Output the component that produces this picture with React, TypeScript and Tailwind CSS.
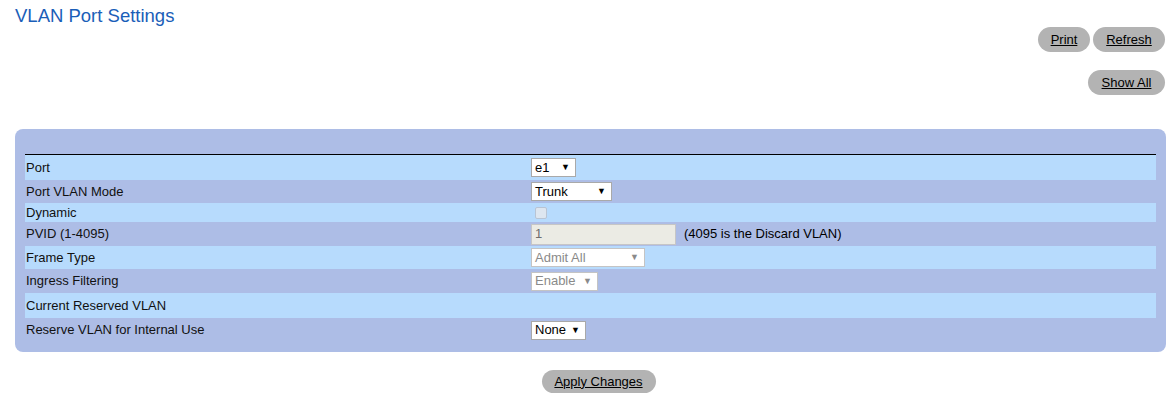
import { ReactNode } from "react";

const FONT = { fontFamily: '"Liberation Sans", Arial, sans-serif' };

function PillButton({ label, w }: { label: string; w: string }) {
  return (
    <button
      className={`${w} h-[25px] rounded-full bg-[#b3b3b3] text-[13px] text-black underline flex items-center justify-center`}
    >
      {label}
    </button>
  );
}

function FakeSelect({
  value,
  w,
  disabled,
}: {
  value: string;
  w: string;
  disabled?: boolean;
}) {
  return (
    <div
      className={`${w} h-[19px] bg-white border border-[#a9a9a9] flex items-center justify-between pl-[3px] pr-[5px] text-[13px] ${
        disabled ? "text-[#8a8a8a] border-[#c4c4c4]" : "text-black"
      }`}
    >
      <span>{value}</span>
      <span className="text-[9px] leading-none">▼</span>
    </div>
  );
}

type Row = { label: string; h: string; light: boolean; value?: ReactNode };

const ROWS: Row[] = [
  { label: "Port", h: "h-[25px]", light: true, value: <FakeSelect value="e1" w="w-[45px]" /> },
  { label: "Port VLAN Mode", h: "h-[23px]", light: false, value: <FakeSelect value="Trunk" w="w-[81px]" /> },
  {
    label: "Dynamic",
    h: "h-[19px]",
    light: true,
    value: (
      <div className="ml-[4px] w-[12px] h-[12px] rounded-[2px] border border-[#b8c4d4] bg-[#dde6f0]" />
    ),
  },
  {
    label: "PVID (1-4095)",
    h: "h-[24px]",
    light: false,
    value: (
      <div className="flex items-center">
        <div className="w-[145px] h-[21px] bg-[#ebebe4] border border-[#c6c6c6] flex items-center pl-[3px] text-[13px] text-[#6d6d6d]">
          1
        </div>
        <span className="ml-[8px] text-[13px] text-black">(4095 is the Discard VLAN)</span>
      </div>
    ),
  },
  { label: "Frame Type", h: "h-[23px]", light: true, value: <FakeSelect value="Admit All" w="w-[114px]" disabled /> },
  { label: "Ingress Filtering", h: "h-[24px]", light: false, value: <FakeSelect value="Enable" w="w-[67px]" disabled /> },
  { label: "Current Reserved VLAN", h: "h-[25px]", light: true },
  { label: "Reserve VLAN for Internal Use", h: "h-[24px]", light: false, value: <FakeSelect value="None" w="w-[55px]" /> },
];

export default function App() {
  return (
    <div className="w-[1172px] h-[410px] bg-white text-black" style={FONT}>
      <div className="flex justify-between pl-[15px] pr-[7px]">
        <h1 className="pt-[5px] text-[18.5px] leading-[22px] text-[#1a5eb8]">VLAN Port Settings</h1>
        <div className="flex flex-col items-end pt-[27px] gap-[18px]">
          <div className="flex gap-[3px]">
            <PillButton label="Print" w="w-[52px]" />
            <PillButton label="Refresh" w="w-[72px]" />
          </div>
          <PillButton label="Show All" w="w-[77px]" />
        </div>
      </div>

      <div className="ml-[15px] mr-[6px] mt-[34px] rounded-[8px] bg-[#adbde6] px-[10px] pt-[25px] pb-[10px]">
        <div className="border-t border-black">
          {ROWS.map((r) => (
            <div
              key={r.label}
              className={`flex items-center ${r.h} ${r.light ? "bg-[#b7dbfd]" : "bg-[#adbde6]"}`}
            >
              <div className="w-[506px] pl-[1px] text-[13px] text-[#111]">{r.label}</div>
              <div className="flex items-center">{r.value}</div>
            </div>
          ))}
        </div>
      </div>

      <div className="flex justify-center pl-[25px] mt-[18px]">
        <button className="w-[114px] h-[23px] rounded-full bg-[#b3b3b3] text-[13px] text-black underline flex items-center justify-center">
          Apply Changes
        </button>
      </div>
    </div>
  );
}
